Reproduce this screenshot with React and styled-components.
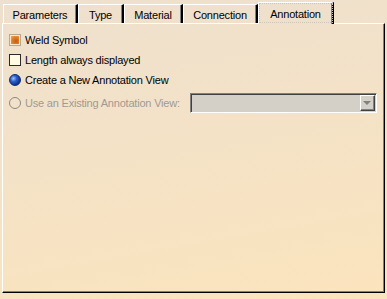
import React from "react"
import styled, { createGlobalStyle } from "styled-components"

const Global = createGlobalStyle`
    html, body {
        margin: 0;
        padding: 0;
        background: #f7e4c4;
    }
    body {
        font-family: "Liberation Sans", Arial, sans-serif;
        font-size: 11px;
        letter-spacing: -0.2px;
        color: #000;
    }
`

const Page = styled.div`
    width: 387px;
    height: 299px;
    box-sizing: border-box;
    padding: 2px 0 0 2px;
    background: linear-gradient(170deg, #eee0ce 0%, #f3e2c8 40%, #fbe4bd 100%);
    overflow: hidden;
`

const TabBar = styled.div`
    display: flex;
    align-items: flex-end;
    height: 21px;
    padding-left: 1px;
    position: relative;
    z-index: 1;
`

const Tab = styled.div`
    box-sizing: border-box;
    width: ${p => p.$w}px;
    height: ${p => (p.$active ? 22 : 19)}px;
    margin: ${p => (p.$active ? "0 0 -1px 0" : "0")};
    display: flex;
    align-items: center;
    justify-content: center;
    padding-top: ${p => (p.$active ? 0 : 1)}px;
    border-top: 1px solid #fff;
    border-left: 1px solid #fff;
    border-right: 2px solid #000;
    box-shadow: inset -1px 0 0 #808080;
    outline: ${p => (p.$active ? "1px dotted #cfc4b8" : "none")};
    outline-offset: -2px;
    background: ${p => (p.$active ? "#efe0cc" : "transparent")};
    font-size: 11px;
    white-space: nowrap;
`

const Panel = styled.div`
    box-sizing: border-box;
    width: 383px;
    height: 270px;
    border-top: 1px solid #fff;
    border-left: 1px solid #fff;
    border-right: 1px solid #000;
    border-bottom: 1px solid #000;
    box-shadow: inset -1px -1px 0 #808080;
    padding: 6px 0 0 6px;
    display: flex;
    flex-direction: column;
`

const Row = styled.div`
    display: flex;
    align-items: center;
    height: ${p => (p.$tall ? 23 : 20)}px;
    padding-top: ${p => (p.$tall ? 1 : 0)}px;
    gap: 4px;
    color: ${p => (p.$disabled ? "#a09a94" : "#000")};
    white-space: nowrap;
`

const Check = styled.span`
    box-sizing: border-box;
    width: 12px;
    height: 12px;
    flex: none;
    border: 1px solid ${p => (p.$checked ? "#b8a88c" : "#2a2a2a")};
    background: ${p =>
        p.$checked
            ? "radial-gradient(circle at 60% 60%, #c85a10 0%, #e0802a 45%, #f4c080 100%)"
            : "#fffbe2"};
    box-shadow: ${p => (p.$checked ? "inset 0 0 0 1px #f8e8d0" : "none")};
`

const Radio = styled.span`
    box-sizing: border-box;
    width: 12px;
    height: 12px;
    flex: none;
    border-radius: 50%;
    border: 1px solid ${p => (p.$checked ? "#0a2a78" : "#8c8884")};
    background: ${p =>
        p.$checked
            ? "radial-gradient(circle at 35% 35%, #9cc0ff 0%, #2a5cc8 35%, #0a2a80 80%)"
            : "transparent"};
`

const Combo = styled.div`
    box-sizing: border-box;
    margin-left: 6px;
    width: 187px;
    height: 20px;
    display: flex;
    justify-content: flex-end;
    align-items: center;
    padding-right: 1px;
    background: #d4d0c8;
    border-top: 1px solid #808080;
    border-left: 1px solid #808080;
    border-right: 1px solid #fff;
    border-bottom: 1px solid #fff;
    box-shadow: inset 1px 1px 0 #404040;
`

const ComboButton = styled.span`
    box-sizing: border-box;
    width: 15px;
    height: 16px;
    margin-top: 1px;
    display: flex;
    align-items: center;
    justify-content: center;
    background: #d4d0c8;
    border-top: 1px solid #fff;
    border-left: 1px solid #fff;
    border-right: 1px solid #404040;
    border-bottom: 1px solid #404040;
    box-shadow: inset -1px -1px 0 #808080;
`

const Arrow = styled.span`
    width: 0;
    height: 0;
    border-left: 4px solid transparent;
    border-right: 4px solid transparent;
    border-top: 4px solid #808080;
`

const tabs = [
    { label: "Parameters", w: 75 },
    { label: "Type", w: 46 },
    { label: "Material", w: 59 },
    { label: "Connection", w: 75 },
    { label: "Annotation", w: 76, active: true },
]

function App() {
    return (
        <Page>
            <Global />
            <TabBar>
                {tabs.map(t => (
                    <Tab key={t.label} $w={t.w} $active={t.active}>
                        {t.label}
                    </Tab>
                ))}
            </TabBar>
            <Panel>
                <Row>
                    <Check $checked />
                    Weld Symbol
                </Row>
                <Row>
                    <Check />
                    Length always displayed
                </Row>
                <Row>
                    <Radio $checked />
                    Create a New Annotation View
                </Row>
                <Row $disabled $tall>
                    <Radio />
                    Use an Existing Annotation View:
                    <Combo>
                        <ComboButton>
                            <Arrow />
                        </ComboButton>
                    </Combo>
                </Row>
            </Panel>
        </Page>
    )
}

export default App
